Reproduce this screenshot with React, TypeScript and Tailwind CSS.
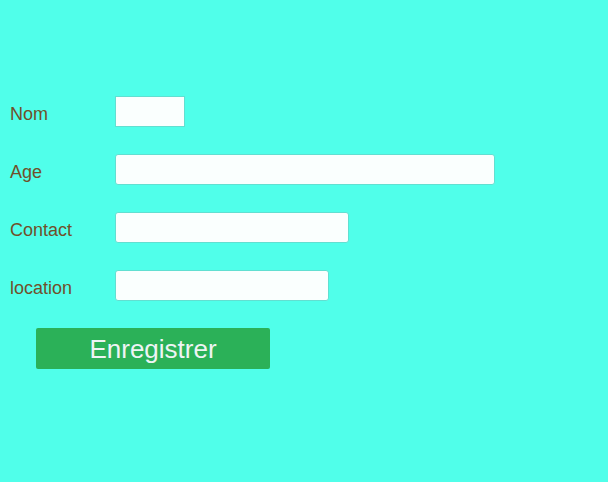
const fields = [
  { id: "nom", label: "Nom", shape: "w-[70px] rounded-none" },
  { id: "age", label: "Age", shape: "w-[380px] rounded-[3px]" },
  { id: "contact", label: "Contact", shape: "w-[234px] rounded-[3px]" },
  { id: "location", label: "location", shape: "w-[214px] rounded-[3px]" },
];

export default function App() {
  return (
    <main className="min-h-screen bg-[#50ffea] pt-24 pl-2.5 font-['Liberation_Sans',Arial,sans-serif]">
      <form onSubmit={(e) => e.preventDefault()}>
        <div className="flex flex-col gap-[27px]">
          {fields.map((f) => (
            <div key={f.id} className="flex items-center">
              <label htmlFor={f.id} className="w-[105px] shrink-0 pt-1 text-lg leading-6 text-[#70502a]">
                {f.label}
              </label>
              <input
                id={f.id}
                type="text"
                className={`h-[31px] min-w-0 border border-[#62dfd1] bg-[#fafffe] px-2 text-base ${f.shape}`}
              />
            </div>
          ))}
        </div>
        <button
          type="submit"
          className="mt-[27px] ml-[26px] h-[41px] w-[234px] rounded-xs bg-[#2bb158] text-[26px] leading-8 text-[#eef4f4]"
        >
          Enregistrer
        </button>
      </form>
    </main>
  );
}
